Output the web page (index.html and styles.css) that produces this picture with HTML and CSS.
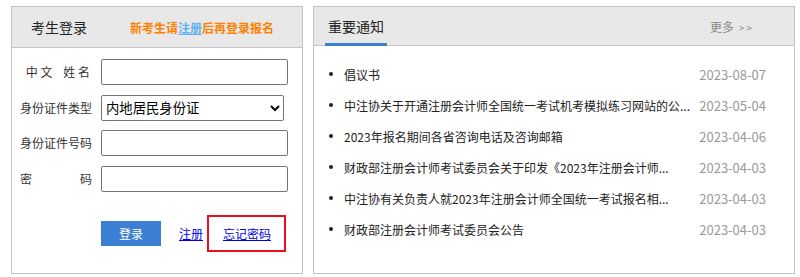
FILE: index.html
```html
<!DOCTYPE html>
<html lang="zh-CN">
<head>
    <meta charset="UTF-8">
    <meta name="viewport" content="width=device-width, initial-scale=1.0">
    <title>考生登录</title>
    <link rel="stylesheet" href="styles.css">
</head>
<body>

    <div class="wrap">
        <div class="panel panel-login">
            <div class="login-head">
                <span class="head-title">考生登录</span>
                <span class="head-tip">新考生请<a href="#">注册</a>后再登录报名</span>
            </div>

            <form class="login-form" id="loginForm">
                <label class="lbl lbl-name" for="cn_name">中 文    姓 名</label>
                <input type="text" id="cn_name" name="cn_name">

                <label class="lbl" for="id_type">身份证件类型</label>
                <select id="id_type" name="id_type">
                    <option>内地居民身份证</option>
                    <option>港澳居民来往内地通行证</option>
                    <option>台湾居民来往大陆通行证</option>
                    <option>护照</option>
                </select>

                <label class="lbl" for="id_no">身份证件号码</label>
                <input type="text" id="id_no" name="id_no">

                <label class="lbl lbl-just" for="password">密码</label>
                <input type="password" id="password" name="password">
            </form>

            <div class="login-actions">
                <button type="submit" form="loginForm">登录</button>
                <a class="link" href="#">注册</a>
                <span class="forget"><a class="link" href="#">忘记密码</a></span>
            </div>
        </div>

        <div class="panel panel-notice">
            <div class="notice-head">
                <span class="tab">重要通知</span>
                <a class="more" href="#">更多<small>&gt;&gt;</small></a>
            </div>

            <ul class="notice-list">
                <li><span class="title">倡议书</span><span class="date">2023-08-07</span></li>
                <li><span class="title">中注协关于开通注册会计师全国统一考试机考模拟练习网站的公...</span><span class="date">2023-05-04</span></li>
                <li><span class="title">2023年报名期间各省咨询电话及咨询邮箱</span><span class="date">2023-04-06</span></li>
                <li><span class="title">财政部注册会计师考试委员会关于印发《2023年注册会计师...</span><span class="date">2023-04-03</span></li>
                <li><span class="title">中注协有关负责人就2023年注册会计师全国统一考试报名相...</span><span class="date">2023-04-03</span></li>
                <li><span class="title">财政部注册会计师考试委员会公告</span><span class="date">2023-04-03</span></li>
            </ul>
        </div>
    </div>

</body>
</html>
```

FILE: styles.css
```css
body {
    margin: 0;
    font-family: "Microsoft YaHei", "Noto Sans CJK SC", sans-serif;
    font-size: 12px;
    color: #333;
    background: #fff;
}
.wrap {
    display: flex;
    gap: 10px;
    padding: 6px 0 0 11px;
}
.panel {
    box-sizing: border-box;
    height: 268px;
    border: 1px solid #c4c4c4;
}
.panel-login {
    width: 292px;
}
.panel-notice {
    width: 482px;
}

/* login */
.login-head {
    display: flex;
    align-items: center;
    height: 40px;
    padding-left: 19px;
    background: #e8e8e8;
    border-bottom: 1px solid #c4c4c4;
}
.head-title {
    font-size: 14px;
    color: #222;
}
.head-tip {
    margin-left: 43px;
    color: #ff8000;
    font-weight: bold;
}
.head-tip a {
    color: #62b2f2;
}
.login-form {
    display: grid;
    grid-template-columns: 72px auto;
    column-gap: 9px;
    row-gap: 9.6px;
    align-items: center;
    justify-items: start;
    padding: 11px 0 0 8px;
    margin: 0;
}
.lbl {
    width: 72px;
    text-align: right;
    line-height: 16px;
}
.lbl-name {
    white-space: pre;
    padding-right: 2px;
    box-sizing: border-box;
}
.lbl-just {
    text-align: justify;
    text-align-last: justify;
}
input, select {
    box-sizing: border-box;
    height: 26px;
    margin: 0;
    border: 1px solid #767676;
    border-radius: 2px;
    font-family: "Microsoft YaHei", "Noto Sans CJK SC", sans-serif;
}
input {
    width: 187px;
    padding: 2px 4px;
}
select {
    width: 183px;
    font-size: 13.33px;
    color: #000;
    background: #fff;
}
.login-actions {
    display: flex;
    align-items: center;
    margin-top: 23px;
    padding-left: 89px;
}
button {
    width: 60px;
    height: 25px;
    padding: 0;
    border: none;
    background-color: #3a7fd2;
    color: #fff;
    font-family: inherit;
    font-size: 12px;
    cursor: pointer;
}
.link {
    color: #0000ee;
    text-decoration: underline;
}
.login-actions > .link {
    margin-left: 18px;
}
.forget {
    display: flex;
    align-items: center;
    box-sizing: border-box;
    width: 79px;
    height: 37px;
    margin-left: 4px;
    padding-left: 14px;
    border: 2px solid #e8101c;
}

/* notices */
.notice-head {
    display: flex;
    align-items: stretch;
    justify-content: space-between;
    height: 38px;
    padding: 0 40px 0 11px;
    background: #e8e8e8;
    border-bottom: 1px solid #c4c4c4;
}
.tab {
    display: flex;
    align-items: center;
    padding: 2px 3px 0;
    margin-bottom: -1px;
    border-bottom: 3px solid #3a7fd2;
    font-size: 14px;
    color: #222;
}
.more {
    align-self: center;
    color: #888;
    text-decoration: none;
}
.more small {
    margin-left: 5px;
    font-size: 10px;
    letter-spacing: 2px;
}
.notice-list {
    list-style: none;
    margin: 0;
    padding: 12.5px 28px 0 15px;
}
.notice-list li {
    display: flex;
    align-items: center;
    justify-content: space-between;
    height: 31px;
}
.title {
    display: flex;
    align-items: center;
    color: #222;
}
.title::before {
    content: "";
    width: 4px;
    height: 4px;
    margin-right: 11px;
    border-radius: 50%;
    background: #222;
}
.date {
    font-size: 13px;
    color: #999;
}
```
